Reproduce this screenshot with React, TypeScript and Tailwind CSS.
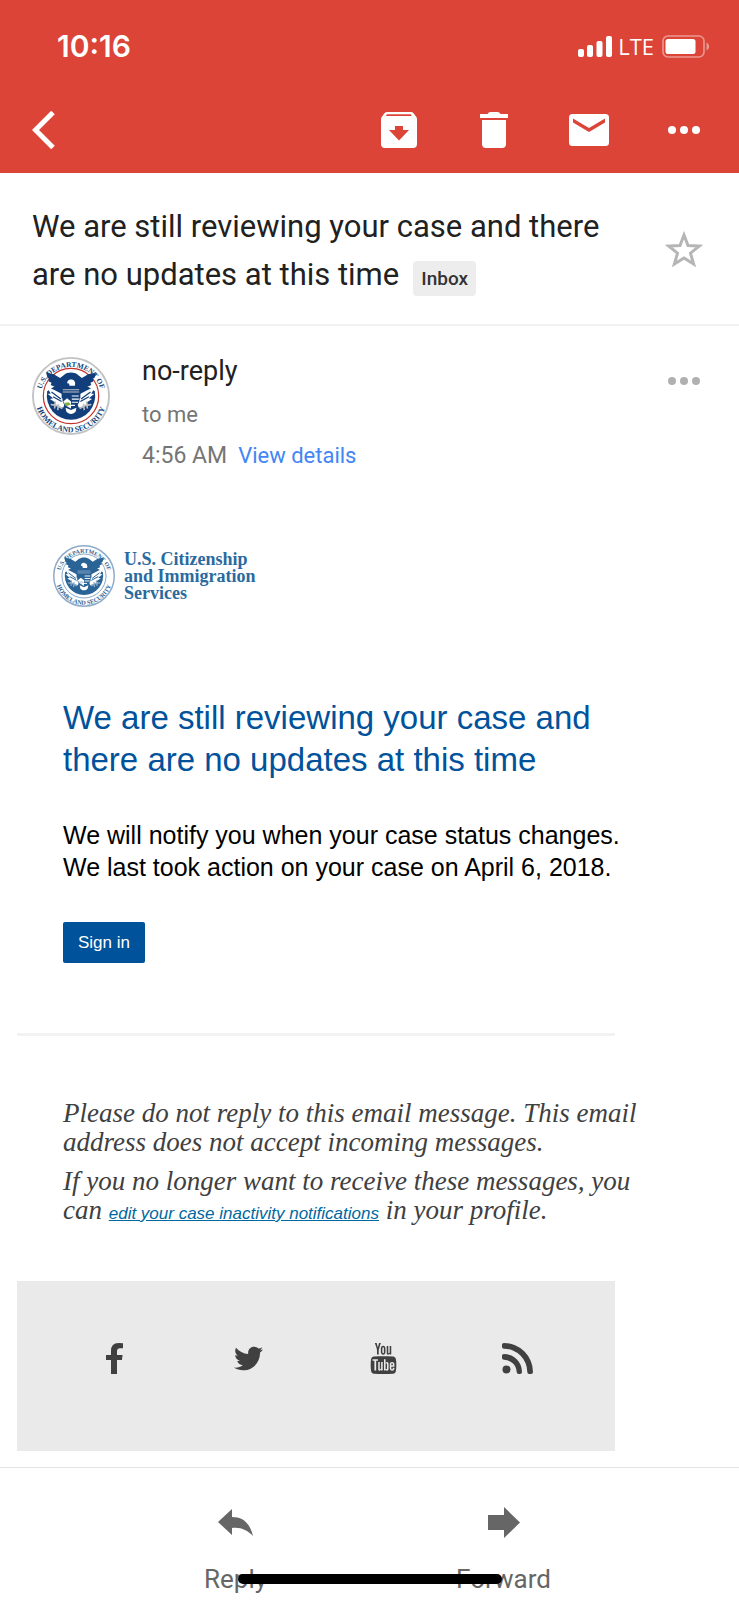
import { FaTwitter } from "react-icons/fa";
import { TfiYoutube } from "react-icons/tfi";

type SealProps = {
  id: string;
  className: string;
  blue: string;
  ring: string;
  line: string;
  accent: string;
};

function Seal({ id, className, blue, ring, line, accent }: SealProps) {
  return (
    <svg viewBox="0 0 100 100" className={className} role="img" aria-label="Department seal">
      <defs>
        <path id={`${id}-top`} d="M11.500 58a39 39 0 1 1 77 0" />
        <path id={`${id}-bottom`} d="M4 46a46.200 46.200 0 1 0 92 0" />
      </defs>
      <circle cx="50" cy="50" r="48.800" fill="#fff" stroke={ring} strokeWidth="2.4" />
      <circle cx="50" cy="50" r="35.500" fill="#fff" stroke={line} strokeWidth="1.500" />
      <path d="M19.500 44a31 31 0 1 0 61 0L72 38H28z" fill={blue} />
      {/* white feathers under the wings */}
      <path d="M19 38l5 9h-4l7 6-4 1 8 5-4 2 13 4 3-8-5-10-10-5zM81 38l-5 9h4l-7 6 4 1-8 5 4 2-13 4-3-8 5-10 10-5z" fill="#fff" />
      <path d="M25 45l12 9M27 51l11 6M75 45l-12 9M73 51l-11 6" stroke={blue} strokeWidth="1.600" />
      {/* olive branch and arrows */}
      <path d="M24 61l7 1 8 4M30 57l-1 9M34 60l-1 8M76 61l-7 1-8 4M70 57l1 9M66 60l1 8" fill="none" stroke={ring} strokeWidth="2" />
      <path d="M18 20l10 2 8 5 5-4c5-4 13-4 18 0l5 4 8-5 10-2-2 7-2 1 1 3-4 2 1 3-5 2v3l-6 3-3 1v8H38v-8l-3-1-6-3v-3l-5-2 1-3-4-2 1-3-2-1z" fill={blue} />
      <path d="M48 37c0-3-1-4-3-3 0-4 3-6 6-5 4 1 5 4 4 8z" fill="#fff" />
      <path d="M39 41h22v13c0 7-5 10-11 13-6-3-11-6-11-13z" fill={blue} />
      <path d="M39.500 42h21M39.500 45h21" stroke={ring} strokeWidth="1.300" />
      <path d="M51 50h9M51 54h9M51 58h8M50 62h5" stroke="#fff" strokeWidth="1.500" />
      <path d="M40 57l5-4 5 4v9c-4-2-8-4-10-9z" fill="#fff" />
      <path d="M41 59l6-1 3 3-6 2z" fill={accent} />
      <path d="M43 65l7 3 7-3-1 5c-3 4-9 4-12 0z" fill="#fff" />
      <g fill={blue} fontFamily="'Liberation Serif', serif" fontWeight="700" textAnchor="middle">
        <text fontSize="9.500">
          <textPath href={`#${id}-top`} startOffset="50%">
            U.S. DEPARTMENT OF
          </textPath>
        </text>
        <text fontSize="10">
          <textPath href={`#${id}-bottom`} startOffset="50%">
            HOMELAND SECURITY
          </textPath>
        </text>
      </g>
    </svg>
  );
}

function Dots() {
  return (
    <svg viewBox="0 0 32 8" className="w-8 h-2" fill="currentColor">
      <circle cx="4" cy="4" r="4" />
      <circle cx="16" cy="4" r="4" />
      <circle cx="28" cy="4" r="4" />
    </svg>
  );
}

function StatusBar() {
  return (
    <div className="flex items-center justify-between h-[92px] pl-[57px] pr-[29px]">
      <span className="text-[30px] leading-9 font-semibold">10:16</span>
      <div className="flex items-center">
        <svg viewBox="0 0 34 21" className="w-[34px] h-[21px]" fill="currentColor">
          <rect x="0" y="13" width="6" height="8" rx="2" />
          <rect x="9" y="9" width="6" height="12" rx="2" />
          <rect x="18.5" y="5" width="6" height="16" rx="2" />
          <rect x="28" y="0" width="6" height="21" rx="2" />
        </svg>
        <span className="ml-[6px] font-['Open_Sans',sans-serif] text-[22px] leading-8">LTE</span>
        <svg viewBox="0 0 48 23" className="ml-2 w-12 h-[23px]">
          <rect x="1" y="1" width="41" height="21" rx="5" fill="none" stroke="#fff" strokeOpacity=".45" strokeWidth="1.6" />
          <rect x="3.5" y="4" width="30" height="15" rx="2.5" fill="#fff" />
          <path d="M44.500 7.500c3.500 1.500 3.500 6.500 0 8z" fill="#fff" fillOpacity=".45" />
        </svg>
      </div>
    </div>
  );
}

function Toolbar() {
  return (
    <div className="flex items-center justify-between h-[81px] pl-8 pr-[35px] pb-[6px]">
      <button aria-label="Back">
        <svg viewBox="0 0 24 38" className="w-6 h-[38px]" fill="none" stroke="currentColor" strokeWidth="5">
          <path d="M21 1.500L3.500 19 21 36.500" />
        </svg>
      </button>
      <div className="flex items-center gap-[55px]">
        <button aria-label="Archive" className="w-10 flex justify-center">
          <svg viewBox="0 0 36 36" className="w-9 h-9" fill="currentColor" fillRule="evenodd">
            <path d="M6 0h24q1.500 0 2.500 1.200l2.500 3.300q1 1.200 1 2.500v25q0 4-4 4H4q-4 0-4-4V7q0-1.300 1-2.500l2.500-3.300Q4.500 0 6 0zM6 2.300L4.800 4h26L29.800 2.300zM14 14v4H8l10 10.500L28 18h-6v-4z" />
          </svg>
        </button>
        <button aria-label="Delete" className="w-10 flex justify-center">
          <svg viewBox="0 0 28 36" className="w-7 h-9" fill="currentColor">
            <path d="M0 2h7.500q1-2 3-2h7q2 0 3 2H28v4H0zM2 8h24v24q0 4-4 4H6q-4 0-4-4z" />
          </svg>
        </button>
        <button aria-label="Mark as unread" className="w-10">
          <svg viewBox="0 0 40 32" className="w-10 h-8">
            <rect width="40" height="32" rx="3.5" fill="currentColor" />
            <path d="M4 4.500v4L20 18 36 8.500v-4L20 14z" fill="#db4437" />
          </svg>
        </button>
        <button aria-label="More" className="w-10 flex justify-center">
          <Dots />
        </button>
      </div>
    </div>
  );
}

export default function App() {
  return (
    <div className="min-h-screen bg-white font-[Roboto,sans-serif]">
      <header className="bg-[#db4437] text-white font-[Inter,sans-serif]">
        <StatusBar />
        <Toolbar />
      </header>

      <section className="flex items-center justify-between pt-[30px] pb-[25px] pl-8 pr-[35px] border-b-2 border-[#f1f1f1]">
        <h1 className="flex-1 pr-[60px] text-[31px] leading-[48px] text-[#212121]">
          We are still reviewing your case and there are no updates at this time
          <span className="inline-block align-bottom mb-[3px] ml-[14px] px-2 rounded-sm bg-[#ededed] text-[19px] leading-[35px] font-medium text-[#333]">
            Inbox
          </span>
        </h1>
        <button aria-label="Star" className="w-10 pb-1 flex justify-center">
          <svg viewBox="0 0 38 36" className="w-[38px] h-9" fill="none" stroke="#b5b5b5" strokeWidth="3">
            <path d="M19 4l4 10.500 11.500.500-9 7.200L28.600 33 19 27l-9.600 6 3.100-10.800-9-7.200L15 14.500z" />
          </svg>
        </button>
      </section>

      <section className="flex items-start pt-[31px] pl-8 pr-[35px]">
        <Seal id="sender" className="w-[78px] h-[78px]" blue="#123f7c" ring="#c0c2c4" line="#c4302b" accent="#7fae45" />
        <div className="flex-1 ml-8">
          <p className="text-[27px] leading-7 text-[#212121]">no-reply</p>
          <p className="mt-4 text-[22px] leading-7 text-[#757575]">to me</p>
          <p className="mt-[13px] text-[23px] leading-7 text-[#757575]">
            4:56 AM
            <a href="#details" className="ml-[11px] text-[22px] text-[#4285f4]">
              View details
            </a>
          </p>
        </div>
        <button aria-label="Message options" className="w-10 mt-5 flex justify-center text-[#b0b0b0]">
          <Dots />
        </button>
      </section>

      <main className="pt-[75px] pl-[17px] pr-[90px] font-['Liberation_Sans',Arial,sans-serif]">
        <div className="flex items-center ml-9">
          <Seal id="uscis" className="w-[62px] h-[62px]" blue="#2a6496" ring="#8fabc9" line="#7da0c4" accent="#c8d8e8" />
          <p className="ml-[9px] font-['Liberation_Serif',serif] font-bold text-[18px] leading-[17px] text-[#2a6a9e]">
            U.S. Citizenship
            <br />
            and Immigration
            <br />
            Services
          </p>
        </div>

        <div className="pl-[46px] mt-[90px]">
          <h2 className="text-[33px] leading-[42px] text-[#00529b]">
            We are still reviewing your case and
            <br />
            there are no updates at this time
          </h2>
          <p className="mt-[38px] text-[25px] leading-8 text-black">
            We will notify you when your case status changes.
            <br />
            We last took action on your case on April 6, 2018.
          </p>
          <button className="mt-[39px] px-[15px] rounded-xs bg-[#00529b] text-[17px] leading-[41px] text-white">
            Sign in
          </button>
        </div>

        <hr className="mt-[70px] mr-[34px] border-t-3 border-[#f2f2f2]" />

        <div className="pl-[46px] mt-[63px] font-['Liberation_Serif',serif] italic text-[27px] leading-[29px] text-[#404040]">
          <p>
            Please do not reply to this email message. This email
            <br />
            address does not accept incoming messages.
          </p>
          <p className="mt-[10px]">
            If you no longer want to receive these messages, you
            <br />
            can{" "}
            <a href="#notifications" className="font-['Liberation_Sans',Arial,sans-serif] text-[17px] text-[#0068a0] underline">
              edit your case inactivity notifications
            </a>{" "}
            in your profile.
          </p>
        </div>

        <div className="grid grid-cols-4 place-items-center mt-[53px] mr-[34px] h-[170px] px-[30px] pb-4 bg-[#eaeaea] text-[#404040]">
          <a href="#facebook" aria-label="Facebook">
            <svg viewBox="0 0 17 31" className="w-[17px] h-[31px]" fill="currentColor">
              <path d="M17 .300v5H14q-3 0-3 3V12h5.600l-.700 5H11v14H5V17H0v-5h5V8Q5 0 12.500 0 15.500 0 17 .300z" />
            </svg>
          </a>
          <a href="#twitter" aria-label="Twitter">
            <FaTwitter size={29} />
          </a>
          <a href="#youtube" aria-label="YouTube">
            <TfiYoutube size={31} />
          </a>
          <a href="#rss" aria-label="RSS">
            <svg viewBox="0 0 31 31" className="w-[31px] h-[31px]" fill="currentColor">
              <circle cx="4.500" cy="26.500" r="4" />
              <path d="M0 1.500Q0 0 2 0A29 29 0 0 1 31 29Q31 31 29 31H27Q25.500 31 25.300 29A23.500 23.500 0 0 0 2 5.700Q0 5.500 0 4z" />
              <path d="M0 12.500Q0 11 2 11A18 18 0 0 1 20 29Q20 31 18 31H16.500Q15 31 14.700 29A13 13 0 0 0 2 16.700Q0 16.500 0 15z" />
            </svg>
          </a>
        </div>
      </main>

      <footer className="relative flex justify-center mt-4 pt-[39px] border-t border-[#e4e4e4] text-[#666]">
        <button className="w-[268px] flex flex-col items-center">
          <svg viewBox="0 0 36 32" className="w-9 h-8" fill="currentColor">
            <path d="M0 15L14 2v8c12 0 18 7 21 19-6-6-12-9-21-8v7z" />
          </svg>
          <span className="mt-6 text-[26px] leading-8">Reply</span>
        </button>
        <button className="w-[268px] flex flex-col items-center">
          <svg viewBox="0 0 32 32" className="w-8 h-8" fill="currentColor">
            <path d="M0 8h16V0l16 15.500L16 31v-8H0z" />
          </svg>
          <span className="mt-6 text-[26px] leading-8">Forward</span>
        </button>
        {/* home indicator */}
        <div className="absolute bottom-[11px] left-1/2 -translate-x-1/2 w-[264px] h-[10px] rounded-full bg-black" />
      </footer>
    </div>
  );
}
